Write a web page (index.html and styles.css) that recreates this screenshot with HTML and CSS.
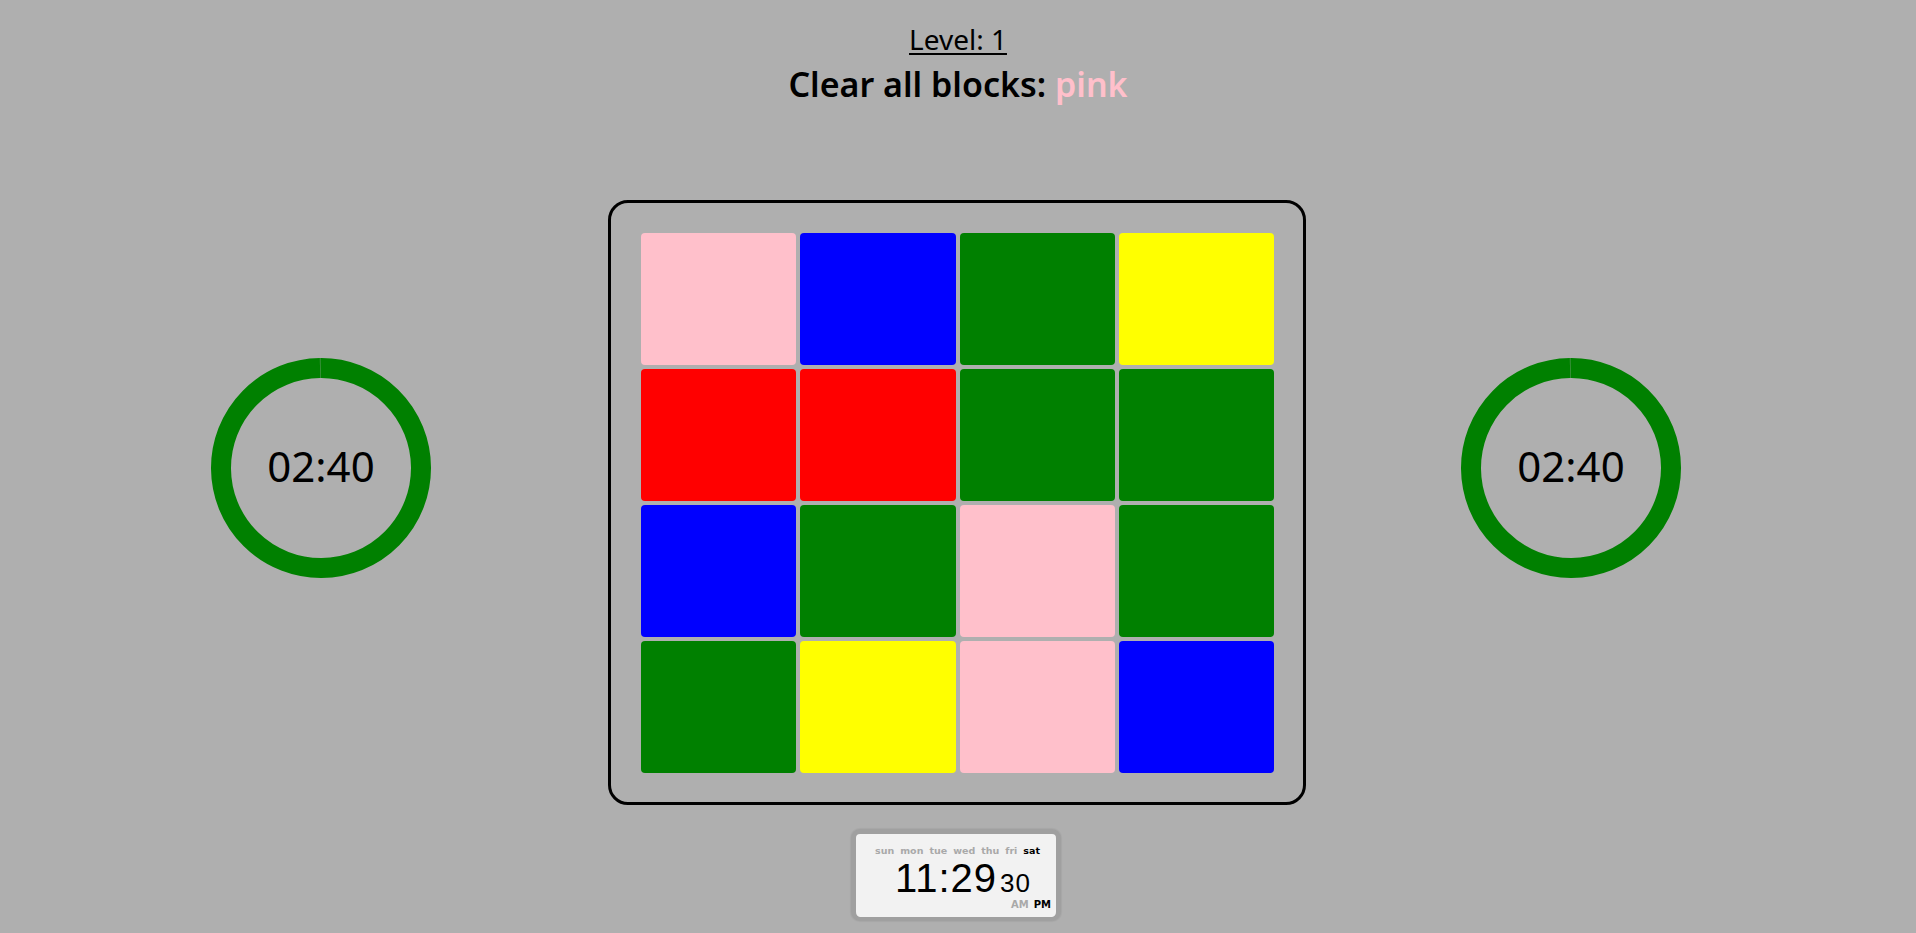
FILE: index.html
```html
<!DOCTYPE html>
<html lang="en">
<head>
<meta charset="utf-8">
<title>Clear the blocks</title>
<link rel="stylesheet" href="styles.css">
</head>
<body>
<header class="header">
  <h2 class="level">Level: 1</h2>
  <h1 class="goal">Clear all blocks: <span class="goal-color">pink</span></h1>
</header>
<main class="game">
  <div class="timer timer-left">
    <svg class="ring" viewBox="0 0 220 220" width="220" height="220">
      <circle cx="110" cy="110" r="100" fill="none" stroke="#008000" stroke-width="20" stroke-dasharray="627.0 1.3" transform="rotate(-90.4 110 110)"/>
    </svg>
    <span class="timer-text">02:40</span>
  </div>
  <div class="board">
    <div class="cell pink"></div>
    <div class="cell blue"></div>
    <div class="cell green"></div>
    <div class="cell yellow"></div>
    <div class="cell red"></div>
    <div class="cell red"></div>
    <div class="cell green"></div>
    <div class="cell green"></div>
    <div class="cell blue"></div>
    <div class="cell green"></div>
    <div class="cell pink"></div>
    <div class="cell green"></div>
    <div class="cell green"></div>
    <div class="cell yellow"></div>
    <div class="cell pink"></div>
    <div class="cell blue"></div>
  </div>
  <div class="timer timer-right">
    <svg class="ring" viewBox="0 0 220 220" width="220" height="220">
      <circle cx="110" cy="110" r="100" fill="none" stroke="#008000" stroke-width="20" stroke-dasharray="627.0 1.3" transform="rotate(-90.4 110 110)"/>
    </svg>
    <span class="timer-text">02:40</span>
  </div>
</main>
<footer class="footer">
  <div class="clock">
    <div class="days">
      <span>sun</span><span>mon</span><span>tue</span><span>wed</span><span>thu</span><span>fri</span><span class="on">sat</span>
    </div>
    <div class="time">
      <span class="hm">11:29</span><span class="sec">30</span>
    </div>
    <div class="ampm"><span>AM</span><span class="on">PM</span></div>
  </div>
</footer>
</body>
</html>
```
FILE: styles.css
```css
html, body {
  margin: 0;
  padding: 0;
}
body {
  background: #afafaf;
  font-family: "Noto Sans", "Open Sans", sans-serif;
  color: #000;
  height: 933px;
  overflow: hidden;
}
.header {
  display: flex;
  flex-direction: column;
  align-items: center;
  padding-top: 22px;
}
.level {
  margin: 0;
  font-size: 28px;
  line-height: 34px;
  font-weight: 400;
  text-decoration: underline;
  text-underline-offset: 3px;
  text-decoration-thickness: 2px;
}
.goal {
  margin: 8px 0 0;
  font-size: 34px;
  line-height: 40px;
  font-weight: 600;
}
.goal-color {
  color: #ffc0cb;
}
.game {
  display: flex;
  align-items: flex-start;
  padding-left: 211px;
  margin-top: 96px;
}
.timer {
  position: relative;
  width: 220px;
  height: 220px;
  margin-top: 158px;
  display: flex;
  align-items: center;
  justify-content: center;
}
.ring {
  position: absolute;
  left: 0;
  top: 0;
}
.timer-text {
  position: relative;
  font-size: 42px;
  font-weight: 400;
  line-height: 1;
  margin-bottom: 4px;
}
.timer-left {
  margin-right: 177px;
}
.timer-right {
  margin-left: 155px;
}
.board {
  border: 3px solid #000;
  border-radius: 20px;
  padding: 30px 29px 29px 30px;
  display: grid;
  width: 633px;
  grid-template-columns: repeat(4, 1fr);
  grid-template-rows: repeat(4, 132px);
  gap: 4px;
}
.cell {
  border-radius: 4px;
}
.pink { background: #ffc0cb; }
.blue { background: #0000ff; }
.green { background: #008000; }
.yellow { background: #ffff00; }
.red { background: #ff0000; }
.footer {
  display: flex;
  justify-content: center;
  margin-top: 24px;
  padding-right: 4px;
}
.clock {
  width: 200px;
  height: 83px;
  background: #f2f2f2;
  border: 5px solid #a0a0a0;
  border-bottom-width: 4px;
  border-radius: 9px;
  box-shadow: 0 0 1px 1px rgba(0, 0, 0, 0.05);
  display: flex;
  flex-direction: column;
  font-family: "DejaVu Sans", sans-serif;
}
.days {
  display: flex;
  justify-content: center;
  gap: 6px;
  margin-top: 11px;
  padding-left: 3px;
  font-size: 9.5px;
  font-weight: 700;
  line-height: 12px;
  color: #a9a9a9;
}
.days .on,
.ampm .on {
  color: #000;
}
.time {
  display: flex;
  align-items: baseline;
  justify-content: center;
  padding-left: 14px;
  margin-top: 1px;
  font-family: "Liberation Sans", Arial, sans-serif;
  line-height: 40px;
  height: 40px;
}
.hm {
  font-size: 40px;
  letter-spacing: 1px;
}
.sec {
  font-size: 26px;
  letter-spacing: 1px;
  margin-left: 3px;
}
.ampm {
  display: flex;
  justify-content: flex-end;
  gap: 5px;
  margin-top: 1px;
  padding-right: 5px;
  font-size: 10px;
  font-weight: 700;
  line-height: 12px;
  color: #a9a9a9;
}
```
